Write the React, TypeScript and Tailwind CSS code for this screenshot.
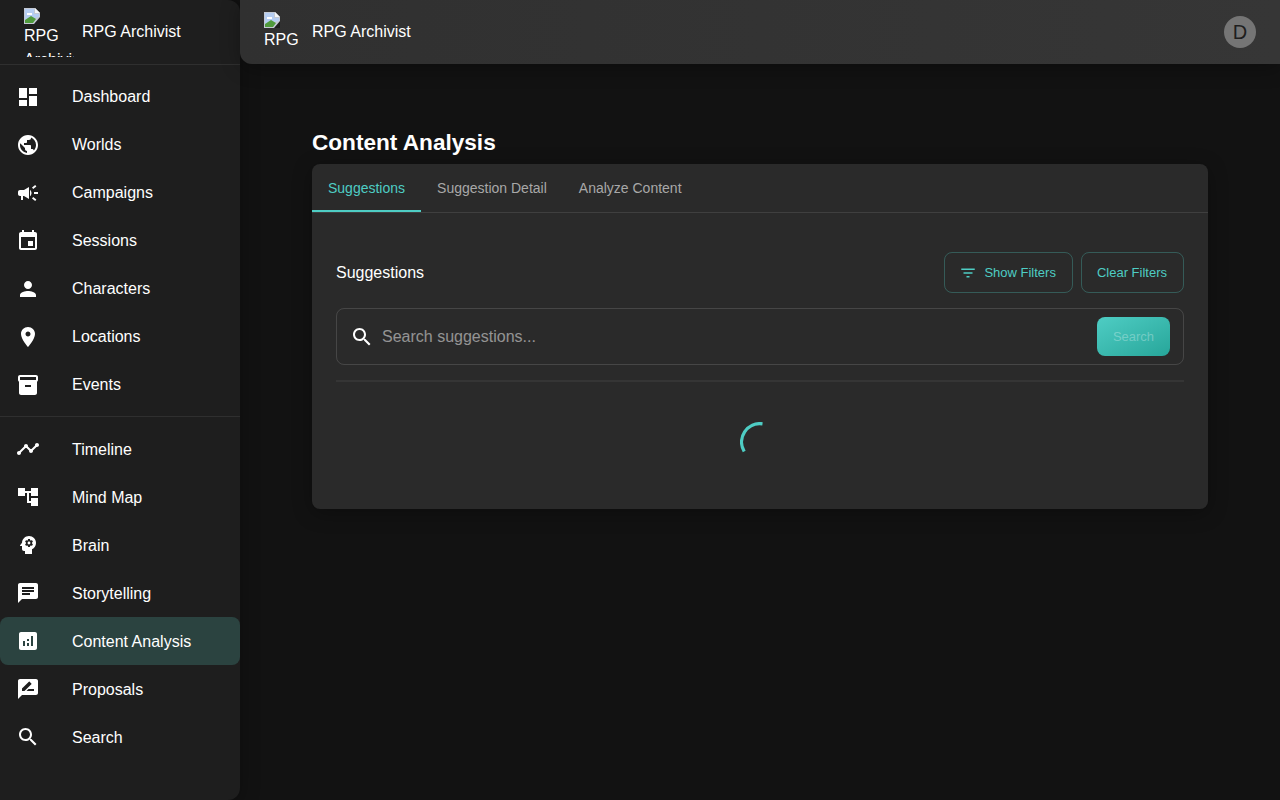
import type { ReactNode } from 'react'

const navTop = [
  { label: 'Dashboard', d: 'M3 13h8V3H3v10zm0 8h8v-6H3v6zm10 0h8V11h-8v10zm0-18v6h8V3h-8z' },
  { label: 'Worlds', d: 'M12 2C6.48 2 2 6.48 2 12s4.48 10 10 10 10-4.48 10-10S17.52 2 12 2zm-1 17.93c-3.95-.49-7-3.85-7-7.93 0-.62.08-1.21.21-1.79L9 15v1c0 1.1.9 2 2 2v1.93zm6.9-2.54c-.26-.81-1-1.39-1.9-1.39h-1v-3c0-.55-.45-1-1-1H8v-2h2c.55 0 1-.45 1-1V7h2c1.1 0 2-.9 2-2v-.41c2.93 1.19 5 4.06 5 7.41 0 2.08-.8 3.97-2.1 5.39z' },
  { label: 'Campaigns', d: 'M18 11v2h4v-2h-4zm-2 6.61c.96.71 2.21 1.65 3.2 2.39.4-.53.8-1.07 1.2-1.6-.99-.74-2.24-1.68-3.2-2.4-.4.54-.8 1.08-1.2 1.61zM20.4 5.6c-.4-.53-.8-1.07-1.2-1.6-.99.74-2.24 1.68-3.2 2.4.4.53.8 1.07 1.2 1.6.96-.72 2.21-1.65 3.2-2.4zM4 9c-1.1 0-2 .9-2 2v2c0 1.1.9 2 2 2h1v4h2v-4h1l5 3V6L8 9H4zm11.5 3c0-1.33-.58-2.53-1.5-3.35v6.69c.92-.81 1.5-2.01 1.5-3.34z' },
  { label: 'Sessions', d: 'M17 12h-5v5h5v-5zM16 1v2H8V1H6v2H5c-1.11 0-1.99.9-1.99 2L3 19c0 1.1.89 2 2 2h14c1.1 0 2-.9 2-2V5c0-1.1-.9-2-2-2h-1V1h-2zm3 18H5V8h14v11z' },
  { label: 'Characters', d: 'M12 12c2.21 0 4-1.79 4-4s-1.79-4-4-4-4 1.79-4 4 1.79 4 4 4zm0 2c-2.67 0-8 1.34-8 4v2h16v-2c0-2.66-5.33-4-8-4z' },
  { label: 'Locations', d: 'M12 2C8.13 2 5 5.13 5 9c0 5.25 7 13 7 13s7-7.75 7-13c0-3.87-3.13-7-7-7zm0 9.5c-1.38 0-2.5-1.12-2.5-2.5s1.12-2.5 2.5-2.5 2.5 1.12 2.5 2.5-1.12 2.5-2.5 2.5z' },
  { label: 'Events', d: 'M20 2H4c-1 0-2 .9-2 2v3.01c0 .72.43 1.34 1 1.69V20c0 1.1 1.1 2 2 2h14c.9 0 2-.9 2-2V8.7c.57-.35 1-.97 1-1.69V4c0-1.1-1-2-2-2zm-5 12H9v-2h6v2zm5-7H4V4l16-.02V7z' },
]

const navBottom = [
  { label: 'Timeline', d: 'M23 8c0 1.1-.9 2-2 2-.18 0-.35-.02-.51-.07l-3.56 3.55c.05.16.07.34.07.52 0 1.1-.9 2-2 2s-2-.9-2-2c0-.18.02-.36.07-.52l-2.55-2.55c-.16.05-.34.07-.52.07s-.36-.02-.52-.07l-4.55 4.56c.05.16.07.33.07.51 0 1.1-.9 2-2 2s-2-.9-2-2 .9-2 2-2c.18 0 .35.02.51.07l4.56-4.55C8.02 9.36 8 9.18 8 9c0-1.1.9-2 2-2s2 .9 2 2c0 .18-.02.36-.07.52l2.55 2.55c.16-.05.34-.07.52-.07s.36.02.52.07l3.55-3.56C19.02 8.35 19 8.18 19 8c0-1.1.9-2 2-2s2 .9 2 2z' },
  { label: 'Mind Map', d: 'M22 11V3h-7v3H9V3H2v8h7V8h2v10h4v3h7v-8h-7v3h-2V8h2v3z' },
  { label: 'Brain', d: 'M13 8.57c-.79 0-1.43.64-1.43 1.43s.64 1.43 1.43 1.43 1.43-.64 1.43-1.43-.64-1.43-1.43-1.43zM13 3C9.25 3 6.2 5.94 6.02 9.64L4.1 12.2c-.25.33-.01.8.4.8H6v3c0 1.1.9 2 2 2h1v3h7v-4.68c2.36-1.12 4-3.53 4-6.32 0-3.87-3.13-7-7-7zm3 7c0 .13-.01.26-.02.39l.83.66c.08.06.1.16.05.25l-.8 1.39c-.05.09-.16.12-.24.09l-.99-.4c-.21.16-.43.29-.67.39L14 13.83c-.01.1-.1.17-.2.17h-1.6c-.1 0-.18-.07-.2-.17l-.15-1.06c-.25-.1-.47-.23-.68-.39l-.99.4c-.09.03-.2 0-.25-.09l-.8-1.39c-.05-.08-.03-.19.05-.25l.84-.66c-.01-.13-.02-.26-.02-.39s.02-.27.04-.39l-.85-.66c-.08-.06-.1-.16-.05-.26l.8-1.38c.05-.09.15-.12.24-.09l1 .4c.2-.15.43-.29.67-.39L12 6.17c.02-.1.1-.17.2-.17h1.6c.1 0 .18.07.2.17l.15 1.06c.24.1.46.23.67.39l1-.4c.09-.03.2 0 .24.09l.8 1.38c.05.09.03.2-.05.26l-.85.66c.03.12.04.25.04.39z' },
  { label: 'Storytelling', d: 'M20 2H4c-1.1 0-1.99.9-1.99 2L2 22l4-4h14c1.1 0 2-.9 2-2V4c0-1.1-.9-2-2-2zM6 9h12v2H6V9zm8 5H6v-2h8v2zm4-6H6V6h12v2z' },
  { label: 'Content Analysis', active: true, d: 'M19 3H5c-1.1 0-2 .9-2 2v14c0 1.1.9 2 2 2h14c1.1 0 2-.9 2-2V5c0-1.1-.9-2-2-2zM9 17H7v-5h2v5zm4 0h-2v-3h2v3zm0-5h-2v-2h2v2zm4 5h-2V7h2v10z' },
  { label: 'Proposals', d: 'M20 2H4c-1.1 0-1.99.9-1.99 2L2 22l4-4h14c1.1 0 2-.9 2-2V4c0-1.1-.9-2-2-2zM6 14v-2.47l6.88-6.88c.2-.2.51-.2.71 0l1.77 1.77c.2.2.2.51 0 .71L8.47 14H6zm12 0h-7.5l2-2H18v2z' },
  { label: 'Search', d: 'M15.5 14h-.79l-.28-.27C15.41 12.59 16 11.11 16 9.5 16 5.91 13.09 3 9.5 3S3 5.91 3 9.5 5.91 16 9.5 16c1.61 0 3.09-.59 4.23-1.57l.27.28v.79l5 4.99L20.49 19l-4.99-5zm-6 0C7.01 14 5 11.99 5 9.5S7.01 5 9.5 5 14 7.01 14 9.5 11.99 14 9.5 14z' },
]

const searchPath = navBottom[6].d
const filterPath = 'M10 18h4v-2h-4v2zM3 6v2h18V6H3zm3 7h12v-2H6v2z'

function Icon({ d, className }: { d: string; className: string }) {
  return (
    <svg viewBox="0 0 24 24" className={className} fill="currentColor">
      <path d={d} />
    </svg>
  )
}

// what the browser shows for an image that did not load
function BrokenImage() {
  return (
    <svg viewBox="0 0 16 16" className="block h-4 w-4">
      <path d="M0 0H11L16 5V16H0Z" fill="#c3c9d4" />
      <path d="M11 0V5H16Z" fill="#f4f6f8" />
      <path d="M1 1H10V6H15V9L1 12Z" fill="#b5cdf2" />
      <path d="M3 5H8V7H3Z" fill="#ffffff" />
      <path d="M1 15V12L7 8L12 11L9 15Z" fill="#4f9a3d" />
      <path d="M10 16L16 9V16Z" fill="#1e1e1e" />
    </svg>
  )
}

function Logo({ className }: { className: string }) {
  return (
    <div className={`shrink-0 overflow-hidden text-base leading-6 text-white ${className}`}>
      <BrokenImage />
      <span>RPG Archivist</span>
    </div>
  )
}

function NavItem({ label, d, active, low }: { label: string; d: string; active?: boolean; low?: boolean }) {
  return (
    <div className={`flex h-12 items-center rounded-lg px-4 text-base text-white ${active ? 'bg-[#2b4340]' : ''}`}>
      <Icon d={d} className="mr-8 h-6 w-6 shrink-0" />
      <span className={low ? 'mt-0.5' : ''}>{label}</span>
    </div>
  )
}

function OutlineButton({ children, className }: { children: ReactNode; className: string }) {
  return (
    <button className={`flex h-[41px] items-center rounded-lg border border-[#4ecdc4]/30 pr-4 text-[13px] text-[#4ecdc4] ${className}`}>
      {children}
    </button>
  )
}

export default function App() {
  return (
    <div className="flex h-[800px] w-[1280px] overflow-hidden bg-[#121212] font-['Liberation_Sans',Arial,sans-serif] text-white">
      <aside className="h-full w-60 shrink-0 rounded-r-xl bg-[#1e1e1e] shadow-[0_4px_20px_rgba(0,0,0,0.3)]">
        <div className="flex h-[65px] items-start border-b border-white/[0.08] pl-6">
          <Logo className="mt-2 mr-2 h-[49px] w-[50px]" />
          <span className="mt-5 text-base leading-6">RPG Archivist</span>
        </div>
        <div className="pt-2 pb-[7px]">
          {navTop.map((item) => (
            <NavItem key={item.label} {...item} />
          ))}
        </div>
        <div className="h-px bg-white/[0.08]" />
        <div className="py-2">
          {navBottom.map((item) => (
            <NavItem key={item.label} {...item} low />
          ))}
        </div>
      </aside>

      <div className="flex min-w-0 flex-1 flex-col">
        <header className="flex h-16 shrink-0 items-start rounded-bl-xl bg-gradient-to-r from-[#303030] to-[#363636] pr-6 pl-6 shadow-[0_4px_20px_rgba(0,0,0,0.3)]">
          <Logo className="mt-3 mr-2 h-10 w-10" />
          <span className="mt-5 text-base leading-6">RPG Archivist</span>
          <div className="mt-4 ml-auto grid h-8 w-8 place-items-center rounded-full bg-[#757575] text-xl text-[#1e1e1e]">D</div>
        </header>

        <main className="flex-1 px-[72px] pt-16">
          <h1 className="mt-px text-[22.6px] leading-7 font-bold text-white">Content Analysis</h1>
          <section className="mt-[7px] rounded-lg bg-[#2a2a2a] shadow-[0_4px_20px_rgba(0,0,0,0.3)]">
            <div className="flex h-[49px] border-b border-white/10 text-sm">
              <div className="relative flex h-12 items-center px-4 text-[#4ecdc4]">
                Suggestions
                <span className="absolute inset-x-0 bottom-0 h-0.5 bg-[#4ecdc4]" />
              </div>
              <div className="flex h-12 items-center px-4 text-[#a8a8a8]">Suggestion Detail</div>
              <div className="flex h-12 items-center px-4 text-[#a8a8a8]">Analyze Content</div>
            </div>
            <div className="px-6 pt-[39px] pb-[47px]">
              <div className="flex items-center justify-between">
                <h2 className="text-base font-normal">Suggestions</h2>
                <div className="flex gap-2">
                  <OutlineButton className="pl-[14px]">
                    <Icon d={filterPath} className="mr-[7px] h-[18px] w-[18px]" />
                    Show Filters
                  </OutlineButton>
                  <OutlineButton className="pl-[15px]">Clear Filters</OutlineButton>
                </div>
              </div>
              <div className="mt-[15px] flex h-[57px] items-center rounded-lg border border-white/[0.13] pr-[13px] pl-[13px]">
                <Icon d={searchPath} className="h-6 w-6 shrink-0" />
                <input
                  placeholder="Search suggestions..."
                  className="ml-2 min-w-0 flex-1 bg-transparent text-base text-white outline-none placeholder:text-white/50"
                />
                <button className="h-[39px] w-[73px] rounded-lg bg-gradient-to-br from-[#4ecdc4] to-[#26a69a] text-[13px] text-white/30">Search</button>
              </div>
              <div className="mt-[15px] h-0.5 bg-white/[0.05]" />
              <div className="mt-10 flex justify-center">
                <svg viewBox="0 0 40 40" className="h-10 w-10" fill="none">
                  <path d="M22.5 1.8A18.4 18.4 0 0 0 4.2 29.5" stroke="#4ecdc4" strokeWidth="3.3" />
                </svg>
              </div>
            </div>
          </section>
        </main>
      </div>
    </div>
  )
}
